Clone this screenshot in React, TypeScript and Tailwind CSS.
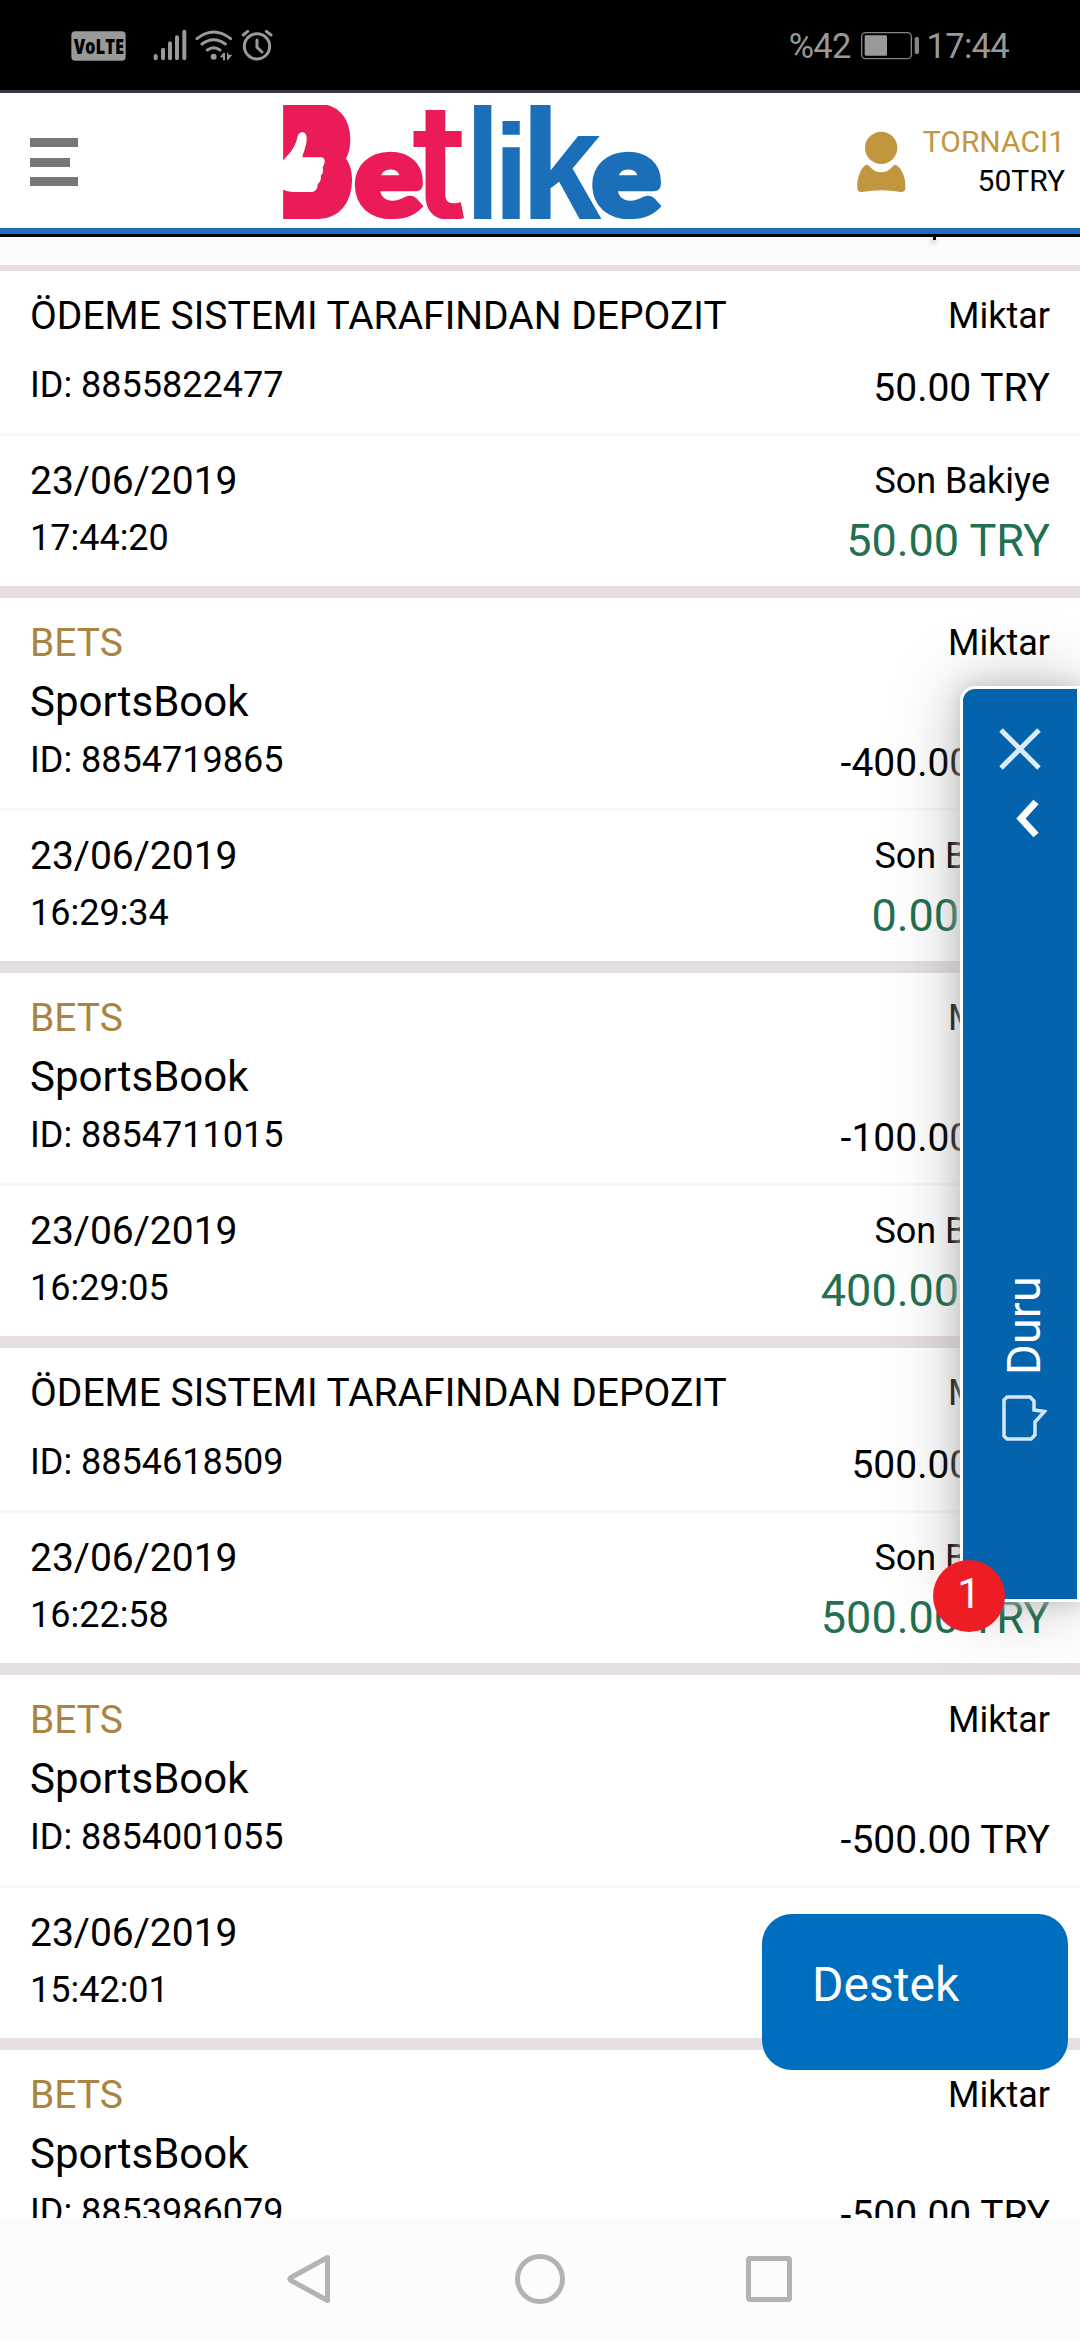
import { useState } from 'react'

type Transaction = {
  id: string
  title: string
  product?: string
  date: string
  time: string
  amount: string
  balance: string
}

const TRANSACTIONS: Transaction[] = [
  { id: '8855822477', title: 'ÖDEME SISTEMI TARAFINDAN DEPOZIT', date: '23/06/2019', time: '17:44:20', amount: '50.00', balance: '50.00' },
  { id: '8854719865', title: 'BETS', product: 'SportsBook', date: '23/06/2019', time: '16:29:34', amount: '-400.00', balance: '0.00' },
  { id: '8854711015', title: 'BETS', product: 'SportsBook', date: '23/06/2019', time: '16:29:05', amount: '-100.00', balance: '400.00' },
  { id: '8854618509', title: 'ÖDEME SISTEMI TARAFINDAN DEPOZIT', date: '23/06/2019', time: '16:22:58', amount: '500.00', balance: '500.00' },
  { id: '8854001055', title: 'BETS', product: 'SportsBook', date: '23/06/2019', time: '15:42:01', amount: '-500.00', balance: '500.00' },
  { id: '8853986079', title: 'BETS', product: 'SportsBook', date: '23/06/2019', time: '15:40:12', amount: '-500.00', balance: '1000.00' },
]

function StatusBar() {
  return (
    <div className="h-[93px] shrink-0 bg-black border-b-[3px] border-[#353943] flex justify-between items-start pl-[71px] pr-[71px] text-[#999999]">
      <svg className="mt-[28px] w-[202px] h-[34px]" viewBox="213 84 606 102" fill="none" stroke="#999999" strokeLinecap="round">
        <rect x="214" y="94" width="163" height="88" rx="12" fill="#999999" stroke="none" />
        <text x="221" y="161" textLength="151" lengthAdjust="spacingAndGlyphs" fontFamily="Open Sans" fontWeight="800" fontSize="64" fill="#000" stroke="none">VoLTE</text>
        <path strokeWidth="12" d="M467 168v7M489 149v26M510 130v45M531 112v63M553 95v80" />
        <path strokeWidth="9" d="M591 116Q641 76 692 116M606 132Q641 106 676 132M622 150Q641 136 660 150" />
        <circle cx="641" cy="170" r="9" fill="#999999" stroke="none" />
        <path fill="#999999" stroke="none" d="M659 172l12-14h4v23h-6v-9zM681 158h4l0 6h12l-14 17h-2z" />
        <circle cx="771" cy="139" r="38" strokeWidth="9" />
        <path strokeWidth="9" strokeLinejoin="round" d="M771 120v22l15 14M730 105l13-11M799 94l14 11" />
      </svg>
      <div className="flex items-start mt-[24px] text-[34.5px] leading-[44px] tracking-[-0.7px]">
        <span>%42</span>
        <svg className="mt-[7px] ml-[10px] mr-[8px] w-[58px] h-[30px]" viewBox="294 93 174 90" fill="none">
          <rect x="296" y="98" width="149" height="78" rx="12" stroke="#858585" strokeWidth="4" />
          <rect x="305" y="106" width="67" height="61" rx="4" fill="#999999" />
          <rect x="455" y="111" width="13" height="51" rx="5" fill="#858585" />
        </svg>
        <span>17:44</span>
      </div>
    </div>
  )
}

function Logo() {
  return (
    <svg className="w-[378px] h-[114px]" viewBox="69 45 1134 342" fontFamily="Lato" fontWeight="900">
      {/* solid backing so the B has no counters */}
      <rect x="110" y="90" width="92" height="90" fill="#eb1b58" />
      <rect x="110" y="180" width="112" height="160" fill="#eb1b58" />
      <g fill="#eb1b58" stroke="#eb1b58">
        <text transform="translate(75 351) scale(0.745 1)" fontSize="375" strokeWidth="72" strokeLinejoin="miter">B</text>
        <text transform="translate(284 374) scale(1.11 1)" fontSize="343" strokeWidth="20">e</text>
        <text transform="translate(456 387) scale(0.96 1)" fontSize="485" strokeWidth="0" fontFamily="Inter" fontWeight="600">t</text>
      </g>
      <g fill="#1b6fb8" fontFamily="Liberation Sans" fontWeight="700">
        <text transform="translate(616 387) scale(0.8 1)" fontSize="472">l</text>
        <text transform="translate(701 387) scale(0.93 1)" fontSize="405">i</text>
        <text transform="translate(781 387) scale(0.93 1)" fontSize="472">k</text>
        <text transform="translate(997 374) scale(1.12 1)" fontSize="343" fontFamily="Lato" fontWeight="900" stroke="#1b6fb8" strokeWidth="20">e</text>
      </g>
      {/* thumbs-up cut into the B */}
      <path
        fill="#fff"
        d="M69 211C88 192 104 174 111 147C113 134 118 127 126 127C136 127 141 135 140 148C139 170 131 185 127 202H184C193 202 196 212 193 221C191 227 188 229 188 232C192 244 187 254 182 257C185 268 179 278 173 282C173 296 167 305 155 306H98Q82 305 69 299Z"
      />
    </svg>
  )
}

function Header() {
  return (
    <header className="relative z-10 h-[144px] shrink-0 bg-white border-b-[3px] border-black">
      <div className="h-[141px] border-b-[6px] border-[#1d6fb8] flex items-start">
        <button className="ml-[30px] mt-[45px] w-[48px] flex flex-col gap-[10.5px]" aria-label="Menu">
          <span className="h-[9px] w-[48px] bg-[#777777]" />
          <span className="h-[9px] w-[40px] bg-[#777777]" />
          <span className="h-[9px] w-[48px] bg-[#777777]" />
        </button>
        <div className="ml-[205px] mt-[12px]"><Logo /></div>
        <div className="ml-auto mr-[15px] mt-[29px] flex items-start">
          <svg className="mt-[9px] mr-[17px] w-[50px] h-[62px]" viewBox="287 393 150 186" fill="#c2963f">
            <circle cx="362.500" cy="443.500" r="48.500" />
            <path d="M317 494Q324 493 329 500Q343 517 362 517Q382 517 396 500Q401 493 408 495C426 506 437 536 435 565Q434 577 421 576Q362 565 305 576Q291 577 291 564C289 534 301 504 317 494Z" />
          </svg>
          <div className="text-right text-[30px] leading-[39px] text-black">
            <p className="text-[#c2963f]">TORNACI1</p>
            <p>50TRY</p>
          </div>
        </div>
      </div>
    </header>
  )
}

function TransactionCard({ tx }: { tx: Transaction }) {
  return (
    <section className="shrink-0 bg-white border-b-[12px] border-[#e5dfe1] text-[36px] leading-[56px]">
      <div className="flex justify-between px-[30px] pt-[17px] pb-[17px] border-b-[3px] border-[#f7f7f7]">
        <div className="pb-[3px]">
          <p className={`text-[39px] ${tx.product ? 'text-[#a98443]' : ''}`}>{tx.title}</p>
          {tx.product && <p className="text-[42px] leading-[61px]">{tx.product}</p>}
          <p className={tx.product ? '' : 'mt-[13px]'}>ID: {tx.id}</p>
        </div>
        <div className="flex flex-col justify-between text-right">
          <p>Miktar</p>
          <p className="text-[39px]">{tx.amount} TRY</p>
        </div>
      </div>
      <div className="flex justify-between h-[150px] px-[30px] pt-[17px]">
        <div>
          <p className="text-[39px]">{tx.date}</p>
          <p className="leading-[58px]">{tx.time}</p>
        </div>
        <div className="text-right">
          <p>Son Bakiye</p>
          <p className="text-[45px] leading-[63px] text-[#227050]">{tx.balance} TRY</p>
        </div>
      </div>
    </section>
  )
}

function ChatPanel({ onClose }: { onClose: () => void }) {
  return (
    <aside className="absolute z-20 left-[960px] top-[686px] w-[120px] h-[916px] bg-[#0463ad] border-[3px] border-white rounded-tl-[15px] shadow-[0_0_20px_#c4c4c4,0_0_70px_rgba(0,0,0,0.26)] flex flex-col items-center text-white">
      <button onClick={onClose} className="mt-[37px]" aria-label="Close">
        <svg className="w-[46px] h-[46px]" viewBox="0 0 46 46" stroke="#dcecf8" strokeWidth="5">
          <path d="M4 4L42 42M42 4L4 42" />
        </svg>
      </button>
      <svg className="mt-[26px] ml-[14px] w-[26px] h-[42px]" viewBox="0 0 26 42" fill="none" stroke="#fff" strokeWidth="7">
        <path d="M22 4L7 20.500L22 37" />
      </svg>
      <div className="mt-[435px] ml-[7px] h-[100px] w-[56px] [writing-mode:vertical-rl] rotate-180 text-[47px] leading-[56px]">Duru</div>
      <svg className="mt-[20px] ml-[7px] w-[46px] h-[46px]" viewBox="0 0 46 46" fill="none" stroke="#d3e7f6" strokeWidth="3.500">
        <path d="M6 2H29L33 6V15L43.500 16.500L34 27V40L30 44H6L3 41V5Z" />
      </svg>
      <span className="absolute left-[-30px] top-[871px] size-[72px] rounded-full bg-[#ee1c25] text-center text-[42px] leading-[67px]">1</span>
    </aside>
  )
}

function NavBar() {
  return (
    <nav className="relative z-30 h-[122px] shrink-0 bg-[#fcfcfc] flex items-center justify-between pl-[284px] pr-[288px]">
      <svg className="w-[50px] h-[54px]" viewBox="0 0 50 54" fill="none" stroke="#b3b3b3" strokeWidth="5" strokeLinejoin="round">
        <path d="M43.500 5.500V48.500L7 28.500Q4.500 27 7 25.500Z" />
      </svg>
      <span className="size-[50px] rounded-full border-[5px] border-[#b3b3b3]" />
      <span className="size-[46px] rounded-[4px] border-[5px] border-[#b3b3b3]" />
    </nav>
  )
}

export default function App() {
  const [chatOpen, setChatOpen] = useState(true)

  return (
    <div className="relative w-[1080px] h-[2340px] overflow-hidden flex flex-col bg-white text-black font-['Roboto',sans-serif]">
      <StatusBar />
      <Header />
      <main className="flex-1 min-h-0 overflow-hidden flex flex-col">
        {/* tail of the previous, mostly scrolled-off entry */}
        <div className="h-[34px] shrink-0 bg-[#fcfcfc] border-b-[6px] border-[#e5dfe1] flex items-start">
          <span className="ml-[933px] size-[3px] bg-black shadow-[-1px_2px_5px_#777]" />
        </div>
        {TRANSACTIONS.map(tx => <TransactionCard key={tx.id} tx={tx} />)}
      </main>
      <NavBar />

      {chatOpen && <ChatPanel onClose={() => setChatOpen(false)} />}

      <button className="absolute z-20 left-[762px] top-[1914px] w-[306px] h-[156px] rounded-[30px] bg-[#006ebe] pl-[50px] pb-[15px] text-left text-white text-[48px]">
        Destek
      </button>
    </div>
  )
}
